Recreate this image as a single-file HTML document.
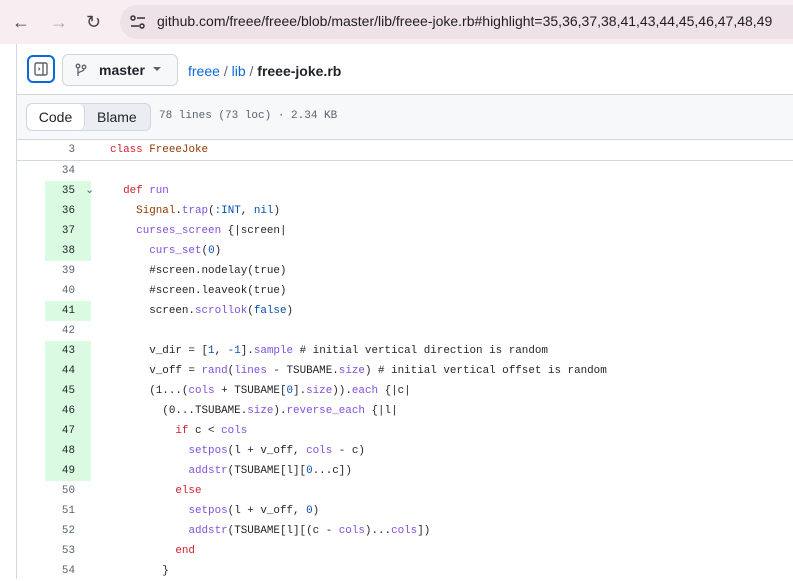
<!DOCTYPE html>
<html><head><style>
body{margin:0;width:793px;height:579px;overflow:hidden;background:#fff;font-family:"Liberation Sans",sans-serif;position:relative}
.bar{position:absolute;left:0;top:0;width:793px;height:44px;background:#f8eef2}
.url{position:absolute;left:120px;top:5px;width:690px;height:34px;border-radius:17px;background:#efe1e8}
.url span{position:absolute;left:37px;top:8px;font-size:14px;color:#1f1f1f;white-space:nowrap}
.nav{position:absolute;top:12px;font-size:18px;color:#444}
.page{position:absolute;left:16px;top:44px;width:777px;height:535px;border-left:1px solid #d0d7de}
.hdr{position:absolute;left:0;top:0;width:777px;height:50px;border-bottom:1px solid #d0d7de;background:#fff}
.side{position:absolute;left:10px;top:11px;width:28px;height:28px;border:2px solid #0969da;border-radius:6px;box-sizing:border-box}
.br{position:absolute;left:45px;top:10px;width:116px;height:32px;border:1px solid #d0d7de;border-radius:6px;background:#f6f8fa;box-sizing:border-box;font-size:14px;font-weight:bold;color:#1f2328}
.crumb{position:absolute;left:171px;top:19px;font-size:14px;color:#0969da}
.tb{position:absolute;left:0;top:51px;width:777px;height:44px;border-bottom:1px solid #d0d7de;background:#f6f8fa}
.seg{position:absolute;left:9px;top:8px;width:125px;height:28px;border:1px solid #d0d7de;border-radius:6px;background:#eaeef2;box-sizing:border-box}
.seg .c{position:absolute;left:0;top:0;width:57px;height:26px;background:#fff;border-radius:6px;border-right:1px solid #d0d7de;font-size:14px;text-align:center;line-height:26px;color:#1f2328}
.seg .b{position:absolute;left:70px;top:0;font-size:14px;line-height:26px;color:#1f2328}
.meta{position:absolute;left:142px;top:66px;font-family:"Liberation Mono",monospace;font-size:11px;color:#59636e}
.code{position:absolute;left:0;font-family:"Liberation Mono",monospace;font-size:10.9px;color:#1f2328}
.ln{position:absolute;left:28px;width:46px;height:20px;text-align:right;padding-right:16px;box-sizing:border-box;line-height:20px;color:#59636e}
.hl{background:#dafbe1;color:#1f2328}
.tx{position:absolute;left:93px;line-height:20px;white-space:pre}
.k{color:#cf222e}.f{color:#8250df}.o{color:#953800}.n{color:#0550ae}
</style></head><body>
<div class="bar"></div>
<div class="nav" style="left:12px">&#8592;</div>
<div class="nav" style="left:50px;color:#aaa">&#8594;</div>
<div class="nav" style="left:86px">&#8635;</div>
<div class="url"><svg style="position:absolute;left:10px;top:10px" width="16" height="14"><circle cx="3" cy="3" r="2" fill="none" stroke="#333" stroke-width="1.5"/><line x1="7" y1="3" x2="15" y2="3" stroke="#333" stroke-width="1.5"/><line x1="1" y1="11" x2="9" y2="11" stroke="#333" stroke-width="1.5"/><circle cx="12" cy="11" r="2" fill="none" stroke="#333" stroke-width="1.5"/></svg><span>github.com/freee/freee/blob/master/lib/freee-joke.rb#highlight=35,36,37,38,41,43,44,45,46,47,48,49</span></div>
<div class="page">
<div class="hdr">
<div class="side"><svg style="position:absolute;left:5px;top:5px" width="14" height="14"><rect x="1" y="1" width="12" height="12" rx="1.5" fill="none" stroke="#59636e" stroke-width="1.4"/><line x1="9" y1="1" x2="9" y2="13" stroke="#59636e" stroke-width="1.4"/><path d="M4.5 5l2 2-2 2z" fill="#59636e"/></svg></div>
<div class="br"><svg style="position:absolute;left:12px;top:8px" width="12" height="14"><circle cx="3" cy="3" r="1.8" fill="none" stroke="#59636e" stroke-width="1.3"/><circle cx="9" cy="4" r="1.8" fill="none" stroke="#59636e" stroke-width="1.3"/><path d="M3 5v8M9 6c0 3-6 2-6 5" fill="none" stroke="#59636e" stroke-width="1.3"/></svg><span style="position:absolute;left:36px;top:7px">master</span><span style="position:absolute;left:90px;top:12px;border:4px solid transparent;border-top:4px solid #59636e"></span></div>
<div class="crumb">freee <span style="color:#59636e">/</span> lib <span style="color:#59636e">/</span> <b style="color:#1f2328">freee-joke.rb</b></div>
</div>
<div class="tb"><div class="seg"><div class="c">Code</div><div class="b">Blame</div></div></div>
<div class="meta">78 lines (73 loc) · 2.34 KB</div>
<div class="code" style="top:96px;width:777px;height:20px;border-bottom:1px solid #d0d7de"><div class="ln" style="top:0">3</div><div class="tx" style="top:0"><span class="k">class</span> <span class="o">FreeeJoke</span></div></div>
<div class="code" style="top:117px">
<div class="ln" style="top:0">34</div>
<div class="ln hl" style="top:20px">35</div><div style="position:absolute;left:68px;top:22px;color:#59636e;font-size:11px">&#8964;</div>
<div class="ln hl" style="top:40px">36</div>
<div class="ln hl" style="top:60px">37</div>
<div class="ln hl" style="top:80px">38</div>
<div class="ln" style="top:100px">39</div>
<div class="ln" style="top:120px">40</div>
<div class="ln hl" style="top:140px">41</div>
<div class="ln" style="top:160px">42</div>
<div class="ln hl" style="top:180px">43</div>
<div class="ln hl" style="top:200px">44</div>
<div class="ln hl" style="top:220px">45</div>
<div class="ln hl" style="top:240px">46</div>
<div class="ln hl" style="top:260px">47</div>
<div class="ln hl" style="top:280px">48</div>
<div class="ln hl" style="top:300px">49</div>
<div class="ln" style="top:320px">50</div>
<div class="ln" style="top:340px">51</div>
<div class="ln" style="top:360px">52</div>
<div class="ln" style="top:380px">53</div>
<div class="ln" style="top:400px">54</div>
<div class="tx" style="top:20px">  <span class="k">def</span> <span class="f">run</span>
    <span class="o">Signal</span>.<span class="f">trap</span>(<span class="n">:INT</span>, <span class="n">nil</span>)
    <span class="f">curses_screen</span> {|screen|
      <span class="f">curs_set</span>(<span class="n">0</span>)
      #screen.nodelay(true)
      #screen.leaveok(true)
      screen.<span class="f">scrollok</span>(<span class="n">false</span>)

      v_dir = [<span class="n">1</span>, <span class="n">-1</span>].<span class="f">sample</span> # initial vertical direction is random
      v_off = <span class="f">rand</span>(<span class="f">lines</span> - TSUBAME.<span class="f">size</span>) # initial vertical offset is random
      (1...(<span class="f">cols</span> + TSUBAME[<span class="n">0</span>].<span class="f">size</span>)).<span class="f">each</span> {|c|
        (0...TSUBAME.<span class="f">size</span>).<span class="f">reverse_each</span> {|l|
          <span class="k">if</span> c &lt; <span class="f">cols</span>
            <span class="f">setpos</span>(l + v_off, <span class="f">cols</span> - c)
            <span class="f">addstr</span>(TSUBAME[l][<span class="n">0</span>...c])
          <span class="k">else</span>
            <span class="f">setpos</span>(l + v_off, <span class="n">0</span>)
            <span class="f">addstr</span>(TSUBAME[l][(c - <span class="f">cols</span>)...<span class="f">cols</span>])
          <span class="k">end</span>
        }</div>
</div>
</div>
</body></html>
